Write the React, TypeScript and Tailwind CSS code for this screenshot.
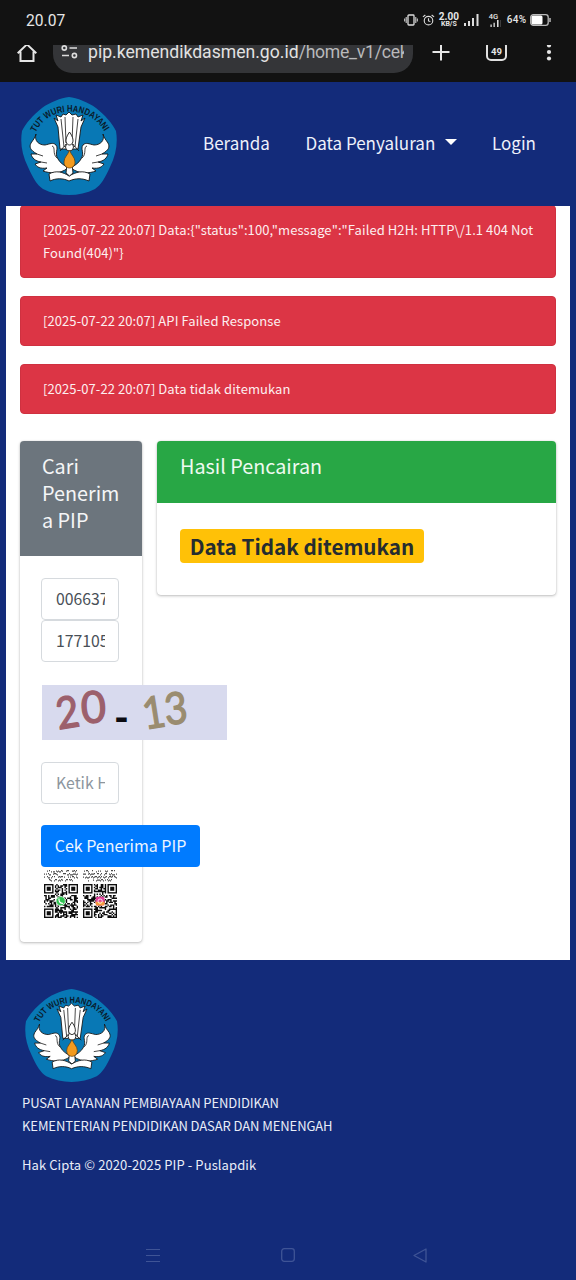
import React from 'react';

const sans = "font-['Noto_Sans_CJK_SC','Noto_Sans',sans-serif]";

function Emblem({ id, className }: { id: string; className: string }) {
  return (
    <svg viewBox="0 0 96 98" preserveAspectRatio="none" className={className} aria-hidden="true">
      <path
        d="M48 0C56 1 67 5 75 11C84 18 91 26 95 34C97 46 95 58 89 70C84 81 80 88 74 92C66 96 57 98 48 98C39 98 30 96 22 92C16 88 12 81 7 70C1 58-1 46 1 34C5 26 12 18 21 11C29 5 40 1 48 0Z"
        fill="#0878b5"
      />
      <path id={id} d="M14.500 35.500C28 7.500 70 7.500 84.500 36.500" fill="none" />
      <text fontSize="9.3" fontWeight="700" fontFamily="Liberation Sans, sans-serif" fill="#0a1a2a">
        <textPath href={`#${id}`} textLength="84" lengthAdjust="spacingAndGlyphs">TUT WURI HANDAYANI</textPath>
      </text>
      <g stroke="#151515" strokeWidth="0.9" strokeLinejoin="round" fill="#fff">
        <path d="M33 21L37 24L35 18L40 20L42 17L45 18L48 15L51 18L55 17L57 20L62 18L60 24L64 21L60 30L57 52H39L37 30Z" />
        <path d="M40 22L43 50M44 20L45 46M52 20L51 46M57 22L54 50" fill="none" strokeWidth="0.8" />
        <path d="M15 37C13 44 18 48 24 48C29 47 32 45 35 48C38 52 33 56 37 62C39 66 43 68 47 71C38 78 28 76 22 74L26 71C19 72 16 70 14 67L20 65C14 64 11 61 10 57L16 57C9 53 8 50 10 46C12 43 14 41 15 37Z" />
        <path d="M82 37C84 44 79 48 73 48C68 47 65 45 62 48C59 52 64 56 60 62C58 66 54 68 50 71C59 78 69 76 75 74L71 71C78 72 81 70 83 67L77 65C83 64 86 61 87 57L81 57C88 53 89 50 87 46C85 43 83 41 82 37Z" />
        <path d="M16 57L22 59M20 65L26 66M81 57L75 59M77 65L71 66M31 49C35 50 31 57 36 61M66 49C62 50 66 57 61 61" fill="none" strokeWidth="0.8" />
        <path d="M28 77C35 73 42 75 48 79C55 75 62 73 69 77L68 84C61 81 55 81 48 84C42 81 35 81 29 84Z" />
        <path d="M39 54C41 51 44 50 45 47M58 54C56 51 53 50 52 47" fill="none" />
        <circle cx="48.5" cy="50" r="4" />
        <path d="M48.5 35C42 44 46 48 48.5 48C51 48 55 44 48.5 35Z" />
        <path d="M46 67H51L52 76L48.5 79L45 76Z" />
      </g>
      <path d="M48.5 53C47 58 43 60 43 65C43 69 46 71 48.5 71C51 71 54 69 54 65C54 60 50 58 48.5 53Z" fill="#f29a1f" stroke="#5b3b10" strokeWidth="0.7" />
    </svg>
  );
}

const inFinder = (x: number, y: number) => (x < 8 && y < 8) || (x > 16 && y < 8) || (x < 8 && y > 16);

function modules(seed: number) {
  let s = seed;
  let d = '';
  for (let y = 0; y < 25; y++) {
    for (let x = 0; x < 25; x++) {
      s = (s * 16807) % 2147483647;
      if (!inFinder(x, y) && s % 100 < 54) d += `M${x} ${y}h1.05v1.05h-1.05z`;
    }
  }
  return d;
}

function caption(seed: number) {
  let s = seed;
  let d = '';
  for (let row = 0; row < 4; row++) {
    const inset = row === 3 ? 5 : row === 0 ? 1 : 0;
    for (let x = inset; x < 34 - inset; x++) {
      s = (s * 16807) % 2147483647;
      if (s % 10 < 7) d += `M${x} ${row * 3 + (s % 3) * 0.6}h1v1.2h-1z`;
    }
  }
  return d;
}

function QrCode({ seed, kind }: { seed: number; kind: 'chat' | 'photo' }) {
  return (
    <div className="flex w-[34px] flex-col gap-[2px]">
      <svg viewBox="0 0 34 12" className="h-[12px] w-[34px]" aria-hidden="true">
        <path d={caption(seed + 77)} fill="#4a4a4a" />
      </svg>
      <svg viewBox="0 0 25 25" className="h-[34px] w-[34px]" aria-hidden="true">
        <path d={modules(seed)} fill="#0c0c0c" />
        {[[0, 0], [18, 0], [0, 18]].map(([x, y]) => (
          <g key={`${x}-${y}`}>
            <rect x={x + 0.5} y={y + 0.5} width="6" height="6" fill="#fff" stroke="#0c0c0c" />
            <rect x={x + 2} y={y + 2} width="3" height="3" fill="#0c0c0c" />
          </g>
        ))}
        {kind === 'chat' ? (
          <g>
            <circle cx="12.3" cy="12.6" r="3.4" fill="#2fc351" stroke="#e8f5ea" strokeWidth="0.6" />
            <path d="M11 11C11 13 12 14.2 13.8 14.2" fill="none" stroke="#fff" strokeWidth="0.9" strokeLinecap="round" />
          </g>
        ) : (
          <g>
            <rect x="9.3" y="9.3" width="6.6" height="6.6" rx="1.6" fill="#e0409a" />
            <path d="M9.3 13H15.9V14.3Q15.9 15.9 14.3 15.9H10.9Q9.3 15.9 9.3 14.3Z" fill="#f59a3c" />
            <circle cx="12.6" cy="12.6" r="1.6" fill="none" stroke="#fff" strokeWidth="0.6" />
          </g>
        )}
      </svg>
    </div>
  );
}

function StatusBar() {
  return (
    <div className="flex h-[45px] items-start justify-between pt-[10px] pr-[25.500px] pl-[26px] font-['Roboto',sans-serif] text-[#e6e6e6]">
      <span className="text-[15.600px] leading-[22px]">20.07</span>
      <div className="flex h-[20px] items-center">
        <svg viewBox="0 0 14 14" className="h-[14px] w-[14px]" fill="none" stroke="#ddd" strokeWidth="1.3" aria-hidden="true">
          <rect x="4" y="2" width="6" height="10" rx="0.8" />
          <path d="M2.2 4V10M11.8 4V10M0.7 5.5V8.5M13.3 5.5V8.5" strokeWidth="1" />
        </svg>
        <svg viewBox="0 0 14 14" className="ml-[4px] h-[14px] w-[13px]" fill="none" stroke="#ddd" strokeWidth="1.2" aria-hidden="true">
          <circle cx="7" cy="7.7" r="4.6" />
          <path d="M1 3.7L3.6 1.6M13 3.7L10.4 1.6M7 5V8L9 8.6" />
        </svg>
        <div className="ml-[4px] flex w-[20px] flex-col items-center font-bold">
          <span className="text-[10px] leading-[8px]">2.00</span>
          <span className="text-[7px] leading-[7px]">KB/S</span>
        </div>
        <svg viewBox="0 0 15 14" className="ml-[5px] h-[14px] w-[15px]" fill="#ddd" aria-hidden="true">
          <path d="M0 10h2v3H0zM4 8h2v5H4zM8 5h2v8H8zM12.500 1h2v12h-2z" />
        </svg>
        <div className="ml-[6px] flex w-[17px] flex-col items-center">
          <span className="text-[7.500px] leading-[6px] font-medium">4G</span>
          <svg viewBox="0 0 17 8" className="h-[7px] w-[17px]" aria-hidden="true">
            <path d="M5 5h1.500v3H5zM8.500 3h1.500v5H8.500zM12.500 0h1.800v8h-1.800z" fill="#ddd" />
            <path d="M16 0h1v8h-1z" fill="#444" />
          </svg>
        </div>
        <span className="ml-[5px] text-[10px] leading-[14px] font-medium tracking-[0.3px]">64%</span>
        <svg viewBox="0 0 21 12" className="ml-[3px] h-[12px] w-[21px]" aria-hidden="true">
          <rect x="0.700" y="0.700" width="17.500" height="10.600" rx="2.600" fill="#111" stroke="#bbb" strokeWidth="1.300" />
          <rect x="1.500" y="1.500" width="11" height="9" rx="1.500" fill="#fff" />
          <path d="M20 4v4" stroke="#bbb" strokeWidth="1.500" />
        </svg>
      </div>
    </div>
  );
}

function AddressBar() {
  return (
    <div className="flex h-[37px] items-start overflow-hidden">
      <svg viewBox="0 0 20 18" className="ml-[17px] h-[18px] w-[20px]" fill="none" stroke="#e6e6e6" strokeWidth="2" aria-hidden="true">
        <path d="M0.700 8.300L10 -0.600L19.300 8.300M3.500 6.500V16H16.500V6.500" />
      </svg>
      <div className="ml-[16px] flex h-[28px] w-[360px] items-start overflow-hidden rounded-b-[19px] bg-[#343538]">
        <svg viewBox="0 0 17 14" className="ml-[8px] h-[14px] w-[17px]" fill="none" stroke="#ddd" strokeWidth="1.600" aria-hidden="true">
          <circle cx="3.300" cy="3" r="2.100" />
          <path d="M8.500 3H16M1 10.500H8" />
          <circle cx="13.400" cy="10.500" r="2.100" />
        </svg>
        <span className="-mt-[4px] ml-[10px] w-[316px] overflow-hidden font-['Roboto',sans-serif] text-[17.600px] leading-[23px] whitespace-nowrap text-[#e2e2e2]">
          pip.kemendikdasmen.go.id<span className="tracking-[-0.250px] text-[#b9b9bb]">/home_v1/cek</span>
        </span>
      </div>
      <svg viewBox="0 0 18 18" className="ml-[19px] h-[18px] w-[18px]" stroke="#e6e6e6" strokeWidth="2" aria-hidden="true">
        <path d="M0.500 7H17.500M9 -1.500V15.500" />
      </svg>
      <div className="-mt-[4px] ml-[36px] flex h-[20px] w-[21px] items-center justify-center rounded-[5px] border-2 border-[#e0e0e0] pt-[2px]">
        <span className="font-['Roboto',sans-serif] text-[9.500px] leading-[10px] font-bold text-[#e6e6e6]">49</span>
      </div>
      <svg viewBox="0 0 6 18" className="ml-[39px] h-[18px] w-[6px]" fill="#e6e6e6" aria-hidden="true">
        <circle cx="3" cy="0.500" r="2.100" />
        <circle cx="3" cy="7" r="2.100" />
        <circle cx="3" cy="13.500" r="2.100" />
      </svg>
    </div>
  );
}

function Alert({ children }: { children: React.ReactNode }) {
  return (
    <div className="rounded-[4px] border border-[#cf3140] bg-[#dc3545] py-[12.900px] pr-[12px] pl-[22px] text-[13px] leading-[22.500px] tracking-[0.080px] text-[#fdeff0]">
      {children}
    </div>
  );
}

function Field({ value, muted }: { value: string; muted?: boolean }) {
  return (
    <div className="flex h-[42px] w-[78px] items-center rounded-[4px] border border-[#d6dade] bg-white px-[13px]">
      <span className={`w-[51px] overflow-hidden pl-px text-[15.800px] leading-[24px] whitespace-nowrap ${muted ? 'text-[#8d969e]' : 'text-[#495057]'}`}>
        {value}
      </span>
    </div>
  );
}

export default function App() {
  return (
    <div className={`flex h-[1280px] w-[576px] flex-col overflow-hidden bg-[#132b7a] ${sans}`}>
      <header className="h-[82px] shrink-0 bg-[#121212]">
        <StatusBar />
        <AddressBar />
      </header>

      <nav className="flex h-[124px] shrink-0 items-start pt-[15px] pl-[21px] text-[17px] leading-[24px] text-[#eef1fa]">
        <Emblem id="arc-top" className="h-[98px] w-[96px]" />
        <div className="mt-[34px] ml-[86px] flex items-center whitespace-nowrap">
          <span className="w-[102.500px]">Beranda</span>
          <span className="w-[139.500px]">Data Penyaluran</span>
          <svg viewBox="0 0 12 6" className="-mt-[3px] h-[6px] w-[12px]" fill="#fff" aria-hidden="true">
            <path d="M0 0H12L6 6Z" />
          </svg>
          <span className="ml-[35px]">Login</span>
        </div>
      </nav>

      <main className="mx-[6px] flex h-[753.500px] shrink-0 flex-col overflow-hidden bg-white px-[14px]">
        <div className="-mt-[0.800px] flex flex-col gap-[17.700px]">
          <Alert>[2025-07-22 20:07] Data:{'{'}"status":100,"message":"Failed H2H: HTTP\/1.1 404 Not Found(404)"{'}'}</Alert>
          <Alert>[2025-07-22 20:07] API Failed Response</Alert>
          <Alert>[2025-07-22 20:07] Data tidak ditemukan</Alert>
        </div>

        <div className="mt-[26.700px] flex items-start gap-[15px]">
          <section className="h-[501px] w-[122px] shrink-0 rounded-[4px] bg-white shadow-[0_0_1px_rgba(0,0,0,0.2),0_1px_3px_rgba(0,0,0,0.25)]">
            <h2 className="h-[115px] rounded-t-[4px] bg-[#6c757d] pt-[11.500px] pl-[22px] text-[19.800px] leading-[27px] text-[#f5f6f7]">
              Cari<br />Penerim<br />a PIP
            </h2>
            <div className="flex flex-col items-start pt-[22.500px] pl-[21px]">
              <Field value="006637" />
              <Field value="177105" />
              <div className="mt-[22.500px] ml-px h-[55px] w-[185px] bg-[#d8daee]">
                <svg viewBox="0 0 185 55" className="h-[55px] w-[185px]" fontFamily="Lato, sans-serif" fontSize="44" strokeWidth="1.3" aria-label="20 - 13">
                  <text transform="translate(16.500 44.500) rotate(-9) scale(0.900 1)" fill="#9c606c" stroke="#9c606c">2</text>
                  <text transform="translate(40 38.500) rotate(-4) scale(0.980 1)" fill="#9c606c" stroke="#9c606c">0</text>
                  <text transform="translate(73 44) scale(1 0.900)" fontFamily="Open Sans, sans-serif" fontSize="40" fontWeight="700" fill="#0b0b12">-</text>
                  <text transform="translate(103 44.500) rotate(-9) scale(0.880 1)" fill="#9a8c70" stroke="#9a8c70">1</text>
                  <text transform="translate(124 40) rotate(-6) scale(0.900 1)" fill="#9a8c70" stroke="#9a8c70">3</text>
                </svg>
              </div>
              <div className="mt-[22px]">
                <Field value="Ketik Hasil" muted />
              </div>
              <button className="mt-[21px] h-[42px] w-[159px] rounded-[4px] bg-[#007bff] pb-px text-[16px] leading-[24px] whitespace-nowrap text-[#eef6ff]">
                Cek Penerima PIP
              </button>
              <div className="mt-[3px] ml-[3px] flex gap-[5px]">
                <QrCode seed={4217} kind="chat" />
                <QrCode seed={90311} kind="photo" />
              </div>
            </div>
          </section>

          <section className="h-[154px] flex-1 rounded-[4px] bg-white shadow-[0_0_1px_rgba(0,0,0,0.2),0_1px_3px_rgba(0,0,0,0.25)]">
            <h2 className="h-[62px] rounded-t-[4px] bg-[#28a745] pt-[11.500px] pl-[23px] text-[19.800px] leading-[27px] text-[#effaf1]">
              Hasil Pencairan
            </h2>
            <div className="pt-[26px] pl-[23px]">
              <span className="flex h-[34px] w-[244px] items-center justify-center rounded-[4px] bg-[#ffc107] text-[20.700px] leading-[34px] font-bold whitespace-nowrap text-[#252c30]">
                Data Tidak ditemukan
              </span>
            </div>
          </section>
        </div>
      </main>

      <footer className="flex flex-1 flex-col pt-[29.500px] pl-[22px] text-[13px] leading-[22.500px] text-[#e9edf8]">
        <Emblem id="arc-bottom" className="ml-[3px] h-[93px] w-[93px]" />
        <p className="mt-[10px] tracking-[-0.080px]">PUSAT LAYANAN PEMBIAYAAN PENDIDIKAN</p>
        <p className="tracking-[-0.090px]">KEMENTERIAN PENDIDIKAN DASAR DAN MENENGAH</p>
        <p className="mt-[17px] tracking-[0.090px]">Hak Cipta © 2020-2025 PIP - Puslapdik</p>
        <div className="mt-[71px] flex items-center">
          <svg viewBox="0 0 14 14" className="ml-[124px] h-[14px] w-[14px]" stroke="#3f5496" strokeWidth="1" aria-hidden="true">
            <path d="M0 1.500H14M0 7.500H14M0 13.500H14" />
          </svg>
          <svg viewBox="0 0 14 14" className="ml-[121px] h-[14px] w-[14px]" fill="none" stroke="#3f5496" strokeWidth="1.300" aria-hidden="true">
            <rect x="0.700" y="0.700" width="12.600" height="12.600" rx="2.500" />
          </svg>
          <svg viewBox="0 0 14 15" className="ml-[118px] h-[15px] w-[14px]" fill="none" stroke="#3f5496" strokeWidth="1.300" strokeLinejoin="round" aria-hidden="true">
            <path d="M13 1V14L1 7.500Z" />
          </svg>
        </div>
      </footer>
    </div>
  );
}
